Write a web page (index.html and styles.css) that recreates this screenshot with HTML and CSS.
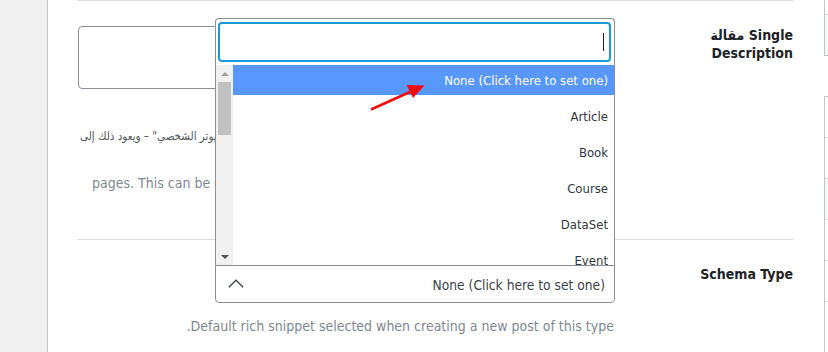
FILE: index.html
```html
<!DOCTYPE html>
<html dir="rtl" lang="ar">
<head>
<meta charset="utf-8">
<title>Titles &amp; Meta</title>
<link rel="stylesheet" href="styles.css">
</head>
<body>
<div class="page">
  <aside class="side-boxes">
    <div class="mini-box mini-top"><div class="mini-head"></div></div>
    <div class="mini-box mini-list">
      <div class="mini-row"></div>
      <div class="mini-row"></div>
      <div class="mini-row shaded"></div>
      <div class="mini-row"></div>
      <div class="mini-row"></div>
    </div>
  </aside>

  <main class="panel">
    <section class="row row-first">
      <div class="label">Single مقالة<br>Description</div>
      <div class="field">
        <textarea class="textarea" aria-label="Single Description"></textarea>
        <p class="note-ar">تم تصميمه ليعمل على "الكمبيوتر الشخصي" – ويعود ذلك إلى</p>
        <p class="note-en" dir="ltr">pages. This can be overridden for individual posts</p>
      </div>
    </section>

    <section class="row">
      <div class="label">Schema Type</div>
      <div class="field">
        <div class="select">
          <div class="dropdown">
            <div class="search-wrap">
              <div class="search"><span class="caret"></span></div>
            </div>
            <div class="results">
              <div class="options">
                <ul class="option-list">
                  <li class="option active">None (Click here to set one)</li>
                  <li class="option">Article</li>
                  <li class="option">Book</li>
                  <li class="option">Course</li>
                  <li class="option">DataSet</li>
                  <li class="option">Event</li>
                </ul>
              </div>
              <div class="scrollbar">
                <div class="sb-btn"><span class="tri-up"></span></div>
                <div class="sb-track"><div class="sb-thumb"></div></div>
                <div class="sb-btn"><span class="tri-down"></span></div>
              </div>
            </div>
          </div>
          <div class="selection">
            <span class="sel-text">None (Click here to set one)</span>
            <svg class="chev" width="16" height="9" viewBox="0 0 16 9"><path d="M0.8 8.2 L8 1.2 L15.2 8.2" fill="none" stroke="#3c434a" stroke-width="1.3"/></svg>
          </div>
        </div>
        <p class="desc" dir="rtl">Default rich snippet selected when creating a new post of this type.</p>
      </div>
    </section>
  </main>

  <div class="left-strip"></div>
</div>

<svg class="annot" width="828" height="352" viewBox="0 0 828 352">
  <line x1="371" y1="109.5" x2="411" y2="91.5" stroke="#f20c0c" stroke-width="2.6"/>
  <polygon points="424.5,85.5 406.5,85 413,98" fill="#f20c0c"/>
</svg>
</body>
</html>
```

FILE: styles.css
```css
* { box-sizing: border-box; }
html, body { margin: 0; padding: 0; }
body {
  width: 828px;
  height: 352px;
  overflow: hidden;
  position: relative;
  background: #fff;
  font-family: "DejaVu Sans Condensed", "DejaVu Sans", sans-serif;
  font-size: 13px;
  color: #3c434a;
}
.page { display: flex; height: 352px; }

/* right-hand boxes (partly visible) */
.side-boxes { width: 4px; flex: none; display: flex; flex-direction: column; }
.mini-box { border-left: 1px solid #c3c4c7; background: #fff; }
.mini-top { height: 56px; border-bottom: 1px solid #c3c4c7; background: #f6f7f7; }
.mini-head { height: 15px; border-bottom: 1px solid #dcdcde; background: #fff; }
.mini-list { margin-top: 40px; border-top: 1px solid #c3c4c7; flex: 1; }
.mini-row { height: 41px; border-bottom: 1px solid #dcdcde; }
.mini-row.shaded { background: #f6f7f7; }

/* left admin strip */
.left-strip { width: 48px; flex: none; background: #f0f0f1; border-right: 1px solid #c3c4c7; }

/* main panel */
.panel { flex: 1; min-width: 0; padding: 0 31px 0 30px; background: #fff; }
.row { display: flex; border-bottom: 1px solid #dcdcde; }
.row-first { border-top: 1px solid #dcdcde; height: 240px; }
.row:last-child { border-bottom: none; }
.label {
  width: 178px;
  flex: none;
  padding-top: 25px;
  font-weight: bold;
  font-size: 14px;
  line-height: 18px;
  color: #1d2327;
  text-align: right;
}
.field { flex: 1; min-width: 0; padding-top: 25px; }

.textarea {
  display: block;
  width: 100%;
  height: 63px;
  margin: 0;
  border: 1px solid #8c8f94;
  border-radius: 4px;
  resize: none;
  background: #fff;
  font: inherit;
}
.note-ar {
  margin: 37px 0 0;
  padding-left: 2px;
  text-align: left;
  font-size: 11.5px;
  line-height: 20px;
  color: #50575e;
  white-space: nowrap;
}
.note-en {
  margin: 27px 0 0;
  padding-left: 14px;
  text-align: left;
  font-size: 14px;
  line-height: 20px;
  color: #808892;
  white-space: nowrap;
  overflow: hidden;
}

/* select2-like control */
.select { position: relative; width: 400px; }
.selection {
  height: 38px;
  border: 1px solid #8c8f94;
  border-radius: 0 0 4px 4px;
  display: flex;
  align-items: center;
  justify-content: space-between;
  padding: 2px 9px 0 12px;
  background: #fff;
  color: #3c434a;
  font-size: 13.7px;
}
.chev { display: block; margin-top: -3px; }
.desc {
  margin: 13px 0 0;
  padding-right: 1px;
  font-size: 14px;
  line-height: 20px;
  color: #808892;
  text-align: right;
}

.dropdown {
  position: absolute;
  left: 0;
  right: 0;
  bottom: 100%;
  height: 247px;
  border: 1px solid #8c8f94;
  border-bottom: none;
  border-radius: 4px 4px 0 0;
  background: #fff;
  display: flex;
  flex-direction: column;
  z-index: 2;
}
.search-wrap { padding: 3px 3px 3px 2px; }
.search {
  height: 40px;
  border: 2px solid #1b9ad8;
  border-radius: 4px;
  display: flex;
  align-items: center;
  padding-right: 5px;
}
.caret { width: 1px; height: 18px; background: #1d2327; }

.results { flex: 1; display: flex; overflow: hidden; }
.options { flex: 1; overflow: hidden; }
.option-list { list-style: none; margin: -6px 0 0; padding: 0; }
.option {
  height: 36px;
  padding: 7px 6px 0;
  line-height: 29px;
  color: #32373c;
  white-space: nowrap;
}
.option.active { background: #5897fb; color: #fff; }

.scrollbar { width: 17px; flex: none; background: #f1f1f1; display: flex; flex-direction: column; }
.sb-btn { height: 17px; display: flex; align-items: center; justify-content: center; }
.sb-track { flex: 1; }
.sb-thumb { width: 13px; height: 53px; margin: 0 2px; background: #c1c1c1; }
.tri-up { width: 0; height: 0; border-left: 4px solid transparent; border-right: 4px solid transparent; border-bottom: 4px solid #a3a3a3; }
.tri-down { width: 0; height: 0; border-left: 4px solid transparent; border-right: 4px solid transparent; border-top: 4px solid #505050; }

/* annotation arrow */
.annot { position: absolute; left: 0; top: 0; pointer-events: none; z-index: 5; }
```
